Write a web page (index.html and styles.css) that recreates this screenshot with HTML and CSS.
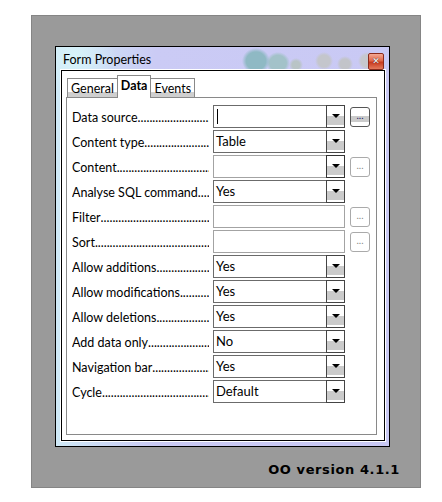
FILE: index.html
```html
<!DOCTYPE html>
<html lang="en">
<head>
  <meta charset="UTF-8">
  <title>Form Properties</title>
  <link rel="stylesheet" href="styles.css">
</head>
<body>
  <div class="panel">
    <div class="dialog">
      <div class="titlebar">
        <span class="title">Form Properties</span>
        <span class="close">&#x2715;</span>
      </div>
      <div class="client">
        <div class="tabs">
          <div class="tab">General</div>
          <div class="tab active">Data</div>
          <div class="tab">Events</div>
        </div>
        <div class="page">
          <div class="row">
            <div class="label"><span>Data source</span><span class="dots"></span></div>
            <div class="field"><span class="value"><span class="caret"></span></span><span class="drop"></span></div>
            <span class="more">...</span>
          </div>
          <div class="row">
            <div class="label"><span>Content type</span><span class="dots"></span></div>
            <div class="field"><span class="value">Table</span><span class="drop"></span></div>
          </div>
          <div class="row">
            <div class="label"><span>Content</span><span class="dots"></span></div>
            <div class="field off"><span class="value"></span><span class="drop"></span></div>
            <span class="more off">...</span>
          </div>
          <div class="row">
            <div class="label"><span>Analyse SQL command</span><span class="dots"></span></div>
            <div class="field"><span class="value">Yes</span><span class="drop"></span></div>
          </div>
          <div class="row">
            <div class="label"><span>Filter</span><span class="dots"></span></div>
            <div class="field off"><span class="value"></span></div>
            <span class="more off">...</span>
          </div>
          <div class="row">
            <div class="label"><span>Sort</span><span class="dots"></span></div>
            <div class="field off"><span class="value"></span></div>
            <span class="more off">...</span>
          </div>
          <div class="row">
            <div class="label"><span>Allow additions</span><span class="dots"></span></div>
            <div class="field"><span class="value">Yes</span><span class="drop"></span></div>
          </div>
          <div class="row">
            <div class="label"><span>Allow modifications</span><span class="dots"></span></div>
            <div class="field"><span class="value">Yes</span><span class="drop"></span></div>
          </div>
          <div class="row">
            <div class="label"><span>Allow deletions</span><span class="dots"></span></div>
            <div class="field"><span class="value">Yes</span><span class="drop"></span></div>
          </div>
          <div class="row">
            <div class="label"><span>Add data only</span><span class="dots"></span></div>
            <div class="field"><span class="value">No</span><span class="drop"></span></div>
          </div>
          <div class="row">
            <div class="label"><span>Navigation bar</span><span class="dots"></span></div>
            <div class="field"><span class="value">Yes</span><span class="drop"></span></div>
          </div>
          <div class="row">
            <div class="label"><span>Cycle</span><span class="dots"></span></div>
            <div class="field"><span class="value">Default</span><span class="drop"></span></div>
          </div>
        </div>
      </div>
    </div>
    <div class="caption">OO version 4.1.1</div>
  </div>
</body>
</html>
```

FILE: styles.css
```css
* {
  box-sizing: border-box;
}
body {
  margin: 0;
  background: #fff;
  font-family: Lato, "Noto Sans", sans-serif;
  font-size: 12.5px;
  color: #000;
}
.panel {
  width: 390px;
  height: 473px;
  margin: 15px 0 0 31px;
  padding: 30px 0 0 23px;
  background: #9a9a9a;
  border: 1px solid #858585;
}
.dialog {
  width: 335px;
  height: 401px;
  border: 1px solid #000;
  background:
    radial-gradient(ellipse 14px 13px at 200px 14px, #8fb9c4 0, #8fb9c4 70%, transparent 100%),
    radial-gradient(ellipse 12px 11px at 222px 16px, #a3c2c9 0, #a3c2c9 70%, transparent 100%),
    radial-gradient(circle at 240px 18px, #b9c4c6 0, #b9c4c6 4px, transparent 7px),
    radial-gradient(circle at 268px 14px, #c4c6cc 0, #c4c6cc 6px, transparent 9px),
    radial-gradient(circle at 289px 17px, #c2c4c9 0, #c2c4c9 5px, transparent 8px),
    radial-gradient(circle at 311px 14px, #c6c8ce 0, #c6c8ce 6px, transparent 9px),
    radial-gradient(circle at 20px 10px, #d8f4fa 0, transparent 40px),
    linear-gradient(90deg, #cfe9f6, #cbcbf5 30%, #c9c9f4);
}
.titlebar {
  height: 23px;
  display: flex;
  align-items: center;
  justify-content: space-between;
  padding: 0 5px 0 7px;
}
.title {
  font-size: 12.5px;
  line-height: 14px;
  margin-top: 2px;
}
.close {
  width: 16px;
  height: 17px;
  margin-top: 5px;
  display: flex;
  align-items: center;
  justify-content: center;
  border: 1px solid #8b2a1c;
  border-radius: 2px;
  background: linear-gradient(#f4a893, #e0664a 45%, #c8391e 55%, #e37a5c);
  color: #fff;
  font-family: "DejaVu Sans", sans-serif;
  font-size: 9px;
  font-weight: bold;
  text-shadow: 0 0 1px #000;
}
.client {
  width: 324px;
  height: 371px;
  margin-left: 5px;
  border: 1px solid #000;
  box-shadow: 0 0 0 1px #fff;
  background: #fff;
  padding: 4px 7px 5px 4px;
  display: flex;
  flex-direction: column;
}
.tabs {
  display: flex;
  align-items: flex-end;
  height: 22px;
  padding-left: 1px;
  position: relative;
  z-index: 1;
}
.tab {
  height: 19px;
  padding: 0 3px;
  border: 1px solid #898989;
  border-bottom: none;
  background: linear-gradient(#fff 70%, #cfcfcf 70%);
  line-height: 19px;
}
.tab + .tab {
  margin-left: -1px;
}
.tab.active {
  height: 23px;
  margin-bottom: -1px;
  background: #fff;
  font-weight: bold;
  padding: 0 3px;
  line-height: 20px;
}
.page {
  flex: 1;
  border: 1px solid #898989;
  padding: 7px 0 0 5px;
  display: flex;
  flex-direction: column;
  gap: 2px;
}
.row {
  display: flex;
  align-items: center;
  height: 23px;
}
.label {
  width: 141px;
  padding-right: 4px;
  padding-top: 2px;
  display: flex;
  white-space: nowrap;
  overflow: hidden;
}
.dots {
  flex: 1;
  overflow: hidden;
}
.dots::after {
  content: "..................................................";
}
.field {
  width: 132px;
  height: 23px;
  border: 1px solid #6b6b6b;
  display: flex;
}
.field.off {
  border-color: #a3a3a3;
}
.value {
  flex: 1;
  padding-left: 2px;
  line-height: 20px;
  font-size: 13px;
}
.caret {
  display: inline-block;
  width: 1px;
  height: 15px;
  background: #000;
  margin: 3px 0 0 1px;
  vertical-align: top;
}
.drop {
  width: 19px;
  margin: -1px -1px -1px 0;
  border: 1px solid #444;
  background: linear-gradient(#fff 48%, #cbcbcb 48%, #cbcbcb 92%, #fff 92%);
  position: relative;
}
.field.off .drop {
  border-color: #333;
}
.drop::after {
  content: "";
  position: absolute;
  left: 5px;
  top: 8px;
  border-left: 4px solid transparent;
  border-right: 4px solid transparent;
  border-top: 4px solid #000;
}
.more {
  width: 20px;
  height: 20px;
  margin-left: 5px;
  border: 1px solid #555;
  border-radius: 3px;
  background: linear-gradient(#fff 45%, #cbcbcb 45%, #cbcbcb 80%, #fff 80%);
  font-size: 10px;
  line-height: 14px;
  text-align: center;
  color: #226;
}
.more.off {
  border-color: #aaa;
  background: #fff;
  color: #888;
}
.caption {
  margin: 16px 20px 0 0;
  text-align: right;
  font-family: "DejaVu Sans", sans-serif;
  font-weight: bold;
  font-size: 13px;
  line-height: 14px;
  letter-spacing: 0.6px;
}
```
